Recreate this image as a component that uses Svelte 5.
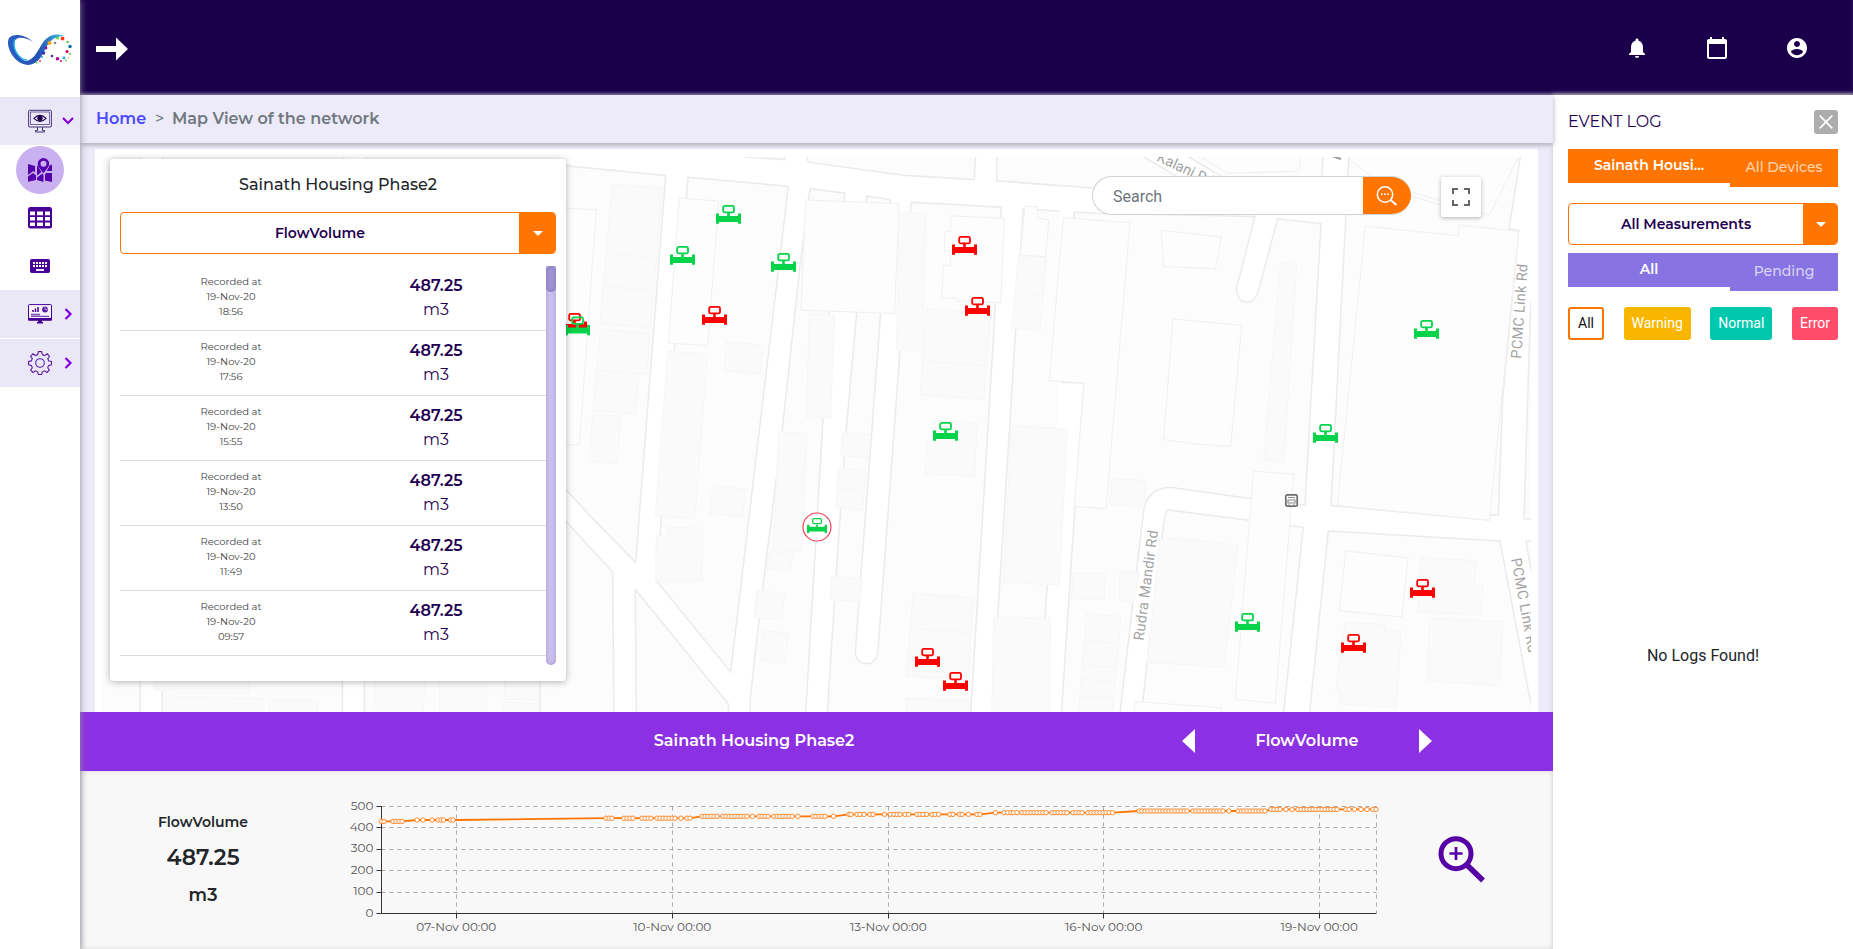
<script>
  const readings = ['18:56', '17:56', '15:55', '13:50', '11:49', '09:57'];

  const meters = [
    ['r', 562, 313], ['g', 565, 316.5], ['g', 716, 205], ['g', 670, 246], ['g', 771, 253], ['r', 702, 306],
    ['r', 952, 236], ['r', 965, 297], ['g', 933, 422], ['r', 915, 648], ['r', 943, 672],
    ['g', 1414, 320], ['g', 1313, 424], ['r', 1410, 579], ['r', 1341, 634], ['g', 1235, 613]
  ];

  const series = [
    [821.4, [381.5, 384, 393, 396, 399, 402]],
    [820, [417, 423, 432, 438, 441, 443.5, 450.5, 453]],
    [818.2, [606, 609, 612, 624, 627, 630, 633, 642, 645, 648, 651, 657, 660, 663, 666, 669, 672, 675, 681, 687, 690]],
    [816.3, [702, 705, 708, 711, 714, 717, 723, 726, 729, 732, 735, 738, 741, 744, 747, 752.5, 759, 762, 765, 768, 774, 777, 780, 783, 786, 789, 792, 798, 813, 816, 819, 822, 825, 833.5]],
    [814.4, [849, 851, 857, 860, 864, 870, 873, 884.5, 890.5, 894, 897, 900, 905, 908.5, 917, 920, 923, 926.5, 932, 935, 938.5, 950, 953, 959.5, 962, 968.5, 977, 980]],
    [812.7, [995.5, 1004, 1007.5, 1011, 1013.5, 1017, 1022, 1025, 1028, 1031, 1034, 1037, 1040, 1043, 1046, 1052, 1055, 1058, 1061, 1064, 1067, 1073, 1076, 1079, 1082, 1088, 1091, 1094, 1097, 1100, 1103, 1106, 1109, 1112.5]],
    [811, [1139, 1142, 1145, 1148, 1151, 1154, 1157, 1160, 1163, 1166, 1169, 1172, 1175, 1178, 1181, 1184, 1187, 1193, 1196, 1199, 1202, 1205, 1208, 1211, 1214, 1217, 1220, 1223, 1229, 1238, 1241, 1244, 1247, 1250, 1253, 1256, 1259, 1262, 1265]],
    [809.4, [1271, 1274, 1277, 1280, 1286, 1292, 1298, 1301, 1304, 1307, 1310, 1313, 1316, 1319, 1322, 1325, 1328, 1331, 1334, 1337, 1346, 1349, 1354.5, 1361, 1367, 1373, 1376]]
  ];
  const points = series.flatMap(([y, xs]) => xs.map((x) => [x, y]));
  const line = points.map((p) => p.join(',')).join(' ');

  const yTicks = [500, 400, 300, 200, 100, 0].map((v, i) => [v, 806.5 + i * 21.4]);
  const xTicks = [['07', 456.3], ['10', 672.3], ['13', 888.3], ['16', 1103.7], ['19', 1319.3]];

  const dots = [
    [49.5, 43, 2, '#ffa400'], [55, 43, 1.3, '#888'], [57.5, 38, 1.5, '#65cf35'], [62.5, 38.5, 1.9, '#fa3a12'],
    [67.7, 42, 1.3, '#67cb4b'], [70, 46.5, 1.8, '#146da5'], [67, 51.5, 1.6, '#e00063'], [70, 54, 1.1, '#76ce42'],
    [46, 48, 1.4, '#a0009a'], [43.5, 53, 1.8, '#3335b0'], [52, 56, 1.3, '#3b34a7'], [57.5, 58.7, 1.8, '#b1009b'],
    [64, 58, 1.4, '#15a9e7'], [61, 61, 1, '#ed1565'], [42, 57, 1, '#1aa7e8'], [40, 61, .9, '#e4234f'],
    [36.5, 62.5, 1, '#69ca4e'], [68.5, 58, .8, '#ffb12c'], [66, 60.5, .9, '#67c94c'], [47, 57, .6, '#ffc15a']
  ];
</script>

<div class="app">
  <aside class="side">
    <div class="logo">
      <svg width="80" height="97" viewBox="0 0 80 97">
        <defs>
          <linearGradient id="lg" x1="0" y1="0" x2="1" y2="0">
            <stop offset="0" stop-color="#2c5fc4" /><stop offset=".55" stop-color="#2450b4" /><stop offset="1" stop-color="#35c5ee" />
          </linearGradient>
        </defs>
        <path d="M32.500 41.500C25 34 13 33 9 38 5 45 13 64 28 65c13-1 15-14 21-22 4-5 9-7 15-7-9-4-17 0-22 8-6 10-9 16-16 17C17 59 9 43 18 38c5-1 10 1 14.500 3.500z" fill="url(#lg)" />
        <path d="M15 39c-4 7 4 21 12 21-6 0-13-8-13-14 0-3 0-5 1-7z" fill="#19b5ee" stroke="#19b5ee" />
        {#each dots as [x, y, r, c]}<circle cx={x} cy={y} {r} fill={c} />{/each}
      </svg>
    </div>
    <div class="item shade first">
      <svg class="ico" width="24" height="24" viewBox="0 0 24 24" fill="none" stroke="#45307c">
        <rect x=".6" y="1.300" width="22.800" height="16.700" rx="1" /><rect x="2.500" y="3" width="19" height="12.500" stroke-width=".7" />
        <path d="M9.500 18v3.500H7.500V23h9v-1.500h-2V18" />
        <path d="M6 9.300q6-6 12 0-6 6-12 0z" fill="#fff" stroke="#210052" stroke-width="1.200" /><circle cx="12" cy="9.200" r="2.700" fill="#210052" stroke="none" />
      </svg>
      <svg class="chev" width="12" height="12" viewBox="0 0 12 12"><path d="M1 3l5 5 5-5" fill="none" stroke="#8400da" stroke-width="2.200" /></svg>
    </div>
    <div class="item map">
      <span class="disc">
        <svg width="24" height="24" viewBox="0 0 24 24" fill="#5600ad">
          <path d="M0 6l7 2v6.500L5.500 13 0 17zM0 18.500l5-3.500 3 2.500V22l-8 1.800z" />
          <path d="M9 8l1-.5c.5 2.500 2 4.500 3.500 6.500L9 17.500zM9 19.500l5.500-4 1 1.400V24L9 22z" />
          <path d="M21.500 7.500L24 6.500V13h-5.500c1.300-1.800 2.500-3.500 3-5.500zM24 15v9l-7-1.500v-6l1-1.500z" />
          <path fill-rule="evenodd" d="M15.500 0a5.700 5.700 0 0 1 5.700 5.700c0 3.300-3.500 6-5.700 9.600-2.500-3.600-5.700-6.300-5.700-9.600A5.700 5.700 0 0 1 15.500 0zm0 2.700a3 3 0 1 0 0 6 3 3 0 0 0 0-6z" />
        </svg>
      </span>
    </div>
    <div class="item tb">
      <svg width="24" height="22" viewBox="0 0 24 22"><rect width="24" height="21.500" rx="2.500" fill="#480097" /><g fill="#fff"><path d="M2 4.500h5v3.700H2zM9 4.500h6v3.700H9zM17 4.500h5v3.700h-5zM2 10h5v3.500H2zM9 10h6v3.500H9zM17 10h5v3.500h-5zM2 15.500h5V19H2zM9 15.500h6V19H9zM17 15.500h5V19h-5z" /></g></svg>
    </div>
    <div class="item kb">
      <svg width="20" height="14" viewBox="0 0 20 14"><rect width="20" height="14" rx="1.800" fill="#480097" /><path d="M3 4h14M3 7h14" stroke="#fff" stroke-width="2" stroke-dasharray="2 1" /><path d="M6 11h8" stroke="#fff" stroke-width="1.800" /></svg>
    </div>
    <div class="item shade">
      <svg class="ico" width="24" height="20" viewBox="0 0 24 20"><rect x=".5" y=".6" width="23" height="15.500" rx=".8" fill="#f6f3fb" stroke="#480097" /><path d="M0 14h24v2.500H0zM10 16h4v2h1v1.500H9V18h1z" fill="#480097" /><path d="M5 8V6M7.500 8V4.500M10 8V3" stroke="#480097" stroke-width="1.500" /><circle cx="17" cy="5.500" r="2.900" fill="#5a1ca0" /><path d="M17 3v2.500h2.500" stroke="#fff" stroke-width=".5" fill="none" /><path d="M3 10.500h9M3 12.300h18" stroke="#7d4cb4" stroke-width="1.300" /></svg>
      <svg class="chev" width="12" height="12" viewBox="0 0 12 12"><path d="M3.500 1l5 5-5 5" fill="none" stroke="#8400da" stroke-width="2.200" /></svg>
    </div>
    <div class="item shade last">
      <svg class="ico" width="24" height="24" viewBox="0 0 24 24" fill="none" stroke="#5b1aa5" stroke-width="1.100">
        <circle cx="12" cy="12" r="4.300" />
        <path d="M10.300.6h3.400l.6 3 2.300 1 2.600-1.800 2.300 2.400-1.700 2.500 1 2.300 2.700.5v3.300l-2.800.6-1 2.300 1.700 2.400-2.400 2.400-2.400-1.700-2.300 1-.6 2.700h-3.400l-.6-2.700-2.300-1L5 21.500l-2.400-2.400 1.700-2.400-1-2.300-2.700-.6v-3.300l2.700-.6 1-2.300-1.700-2.400L5 2.800l2.400 1.700 2.300-1z" />
      </svg>
      <svg class="chev" width="12" height="12" viewBox="0 0 12 12"><path d="M3.500 1l5 5-5 5" fill="none" stroke="#8400da" stroke-width="2.200" /></svg>
    </div>
  </aside>

  <div class="main">
    <header>
      <svg class="arrow" width="32" height="24" viewBox="0 0 32 24"><path d="M0 9h20V.5L32 12 20 23.500V15H0z" fill="#fff" /></svg>
      <nav>
        <svg width="24" height="24" viewBox="0 0 24 24" fill="#fff"><path d="M12 22c1.100 0 2-.9 2-2h-4c0 1.100.9 2 2 2zm6-6v-5c0-3.070-1.640-5.640-4.500-6.320V4c0-.83-.67-1.500-1.500-1.500s-1.500.67-1.500 1.500v.68C7.630 5.360 6 7.920 6 11v5l-2 2v1h16v-1l-2-2z" /></svg>
        <svg width="24" height="24" viewBox="0 0 24 24" fill="#fff"><path d="M20 3h-1V1h-2v2H7V1H5v2H4c-1.100 0-2 .9-2 2v16c0 1.100.9 2 2 2h16c1.100 0 2-.9 2-2V5c0-1.100-.9-2-2-2zm0 18H4V8h16v13z" /></svg>
        <svg width="24" height="24" viewBox="0 0 24 24" fill="#fff"><path d="M12 2C6.480 2 2 6.480 2 12s4.480 10 10 10 10-4.480 10-10S17.520 2 12 2zm0 3c1.660 0 3 1.340 3 3s-1.340 3-3 3-3-1.340-3-3 1.340-3 3-3zm0 14.200c-2.500 0-4.710-1.280-6-3.220.03-1.990 4-3.080 6-3.080 1.990 0 5.970 1.090 6 3.080-1.290 1.940-3.500 3.220-6 3.220z" /></svg>
      </nav>
    </header>

    <div class="body">
      <div class="left">
        <div class="crumbs"><span class="home">Home</span><span class="sep">&gt;</span><span class="page">Map View of the network</span></div>
        <div class="mapwrap">
          <div class="mapbox">
            <svg class="tiles" width="1429" height="555" viewBox="102 157 1429 555">
              <g transform="translate(95 640) scale(.33333)" class="land">
                <path d="M-10-1500H137L135 240H-10zM203 20L201 240H742L746-1500H203zM814-1500L808 240H1560V-1500z" />
                <path class="bld" d="M180 100h52v52h-52zM242 110h220v50H242zM212 168l292 8v70H212zM522 178l146 3v60H522zM842 100h148l-6 150H834zM1033 110h143v140h-143zM1228 110h138v68h-138zM1222 186l143 8v50h-143z" />
              </g>
              <g transform="translate(560 140) scale(.33333 .3699)" class="land">
                <path class="road" d="M0 40L1500 46V160L0 68zM317 96L227 1142 0 928V1010L158 1168 162 1580H229L226 1215 506 1528V1580H572L570 1515 740 125H685L512 1438 290 1190 384 101z" stroke="none" />
                <path d="M0 68L317 96 227 1142 100 1025 0 928z" />
                <path d="M384 101L685 125 512 1438 288 1190 300 1066z" />
                <path d="M-60 955L158 1168 162 1580H-60zM226 1215L505 1525 506 1580H229z" />
                <path class="road" stroke="none" d="M560 1580L720 340 750 120H1500V1580z" />
                <path d="M750 132L855 144 808 465 735 1580H572L570 1515 598 1290 607 1220 666 790 720 340z" />
                <path d="M920 152L990 161 962 468 1020 468 1054 168 1324 182 1230 1580H800L828 1180 858 790 890 468z" />
                <path class="road" d="M962 468L902 1187 886 1385Q888 1415 919 1416 950 1415 954 1380L1020 568 1028 468" />
                <path d="M1390 185L1600 200 1506 655 1455 1290 1440 1580H1295L1313 1290z" />
                <path d="M740 46L745 60 1030 95 1243 107 1247 40H740zM1312 40L1310 110 1600 130V40zM555 46L674 53 672 40z" />
                <path class="wht" d="M0 184L109 189 58 824H0zM358 157L476 165 443 556 325 549zM737 162L1017 172 1004 469 723 460zM1173 205L1333 212 1322 440 1192 435V427H1146L1150 340H1172V300H1153L1155 247H1172zM1394 180H1432V211L1467 216 1457 316 1382 311z" />
                <path class="bld" d="M157 119L308 130 270 508 120 497zM121 512L269 522 261 633 236 632 227 741 99 732zM98 741L182 746 172 875 87 869zM147 309L296 319M132 396L283 407M110 622L238 632M323 571L442 579 405 1024 286 1016zM325 1047L428 1050 425 1192H287L289 1070H325zM500 546L607 554 600 632 492 624zM458 935L557 944 547 1018 449 1010zM748 470L824 472 811 752 739 750zM752 616H816M656 790L740 794 725 1112 640 1110zM648 904H736M645 1022H732M628 1114L698 1118 690 1164 620 1158zM590 1219L673 1225 665 1297 583 1291zM610 1326L686 1334 674 1416 601 1407zM848 791L932 796 927 858 843 854zM835 888L917 894 908 1000 828 994zM831 945H912M815 1181L906 1187 899 1248 811 1243zM1018 195L1097 199 1087 568 1009 568zM1100 457L1292 467 1271 701 1081 689zM1089 598L1280 610M1120 757L1251 765 1243 909 1095 902 1101 810H1117zM1059 1226L1240 1237 1224 1460 1039 1449zM1048 1320L1232 1332M1039 1510L1228 1514V1580H1039zM1375 313L1459 318 1440 515 1355 509zM1370 415L1450 420M1354 773L1521 779 1500 1202 1331 1196zM1301 1290L1472 1293 1468 1580H1295z" />
              </g>
              <g transform="translate(1040 140) scale(.33333 .3699)" class="land">
                <path class="road" stroke="none" d="M60 110H1500V1580H40z" />
                <path d="M-130 40L-130 110 160 130 480 135 300 40zM435 40L640 150 843 140 850 40z" />
                <path d="M170 198L645 207 590 400Q590 437 621 439 648 437 656 405L713 213 843 226 795 987 752 983 635 970 400 940Q320 935 310 1010L236 1580H62L105 990 132 657 66 655 103 195z" />
                <path d="M385 1000L628 1028 790 1047 727 1580H300L365 1080 374 1020Q378 1000 385 1000z" />
                <path d="M927 40H1442L1407 240 1436 245 1388 700 1375 1014 1350 1013 1348 1028 873 988z" />
                <path d="M865 1057L1380 1084 1473 1525 1490 1580H805zM1472 440L1452 1024 1490 1026V440zM1458 1084H1490V1250z" />
                <path class="wht" d="M70 210L270 224 198 997 103 990 132 657 28 650zM364 244L544 262 526 348 371 342zM399 484L605 501 572 828 480 823 371 810zM641 895L761 904 706 1522 586 1512zM976 233L1255 259 1258 230 1436 247 1348 1028 892 988zM918 1111L1104 1130 1085 1290 898 1272zM485 46L562 90 777 84 782 46M927 52L1020 115 1348 203 1435 46M1020 128L1200 175M280 1580L284 1518 545 1535V1580" />
                <path class="bld" d="M722 331L770 337 731 870 671 864zM215 915L317 921 313 990 211 986zM98 1172H195L193 1242 96 1240zM239 1168H298L280 1249 239 1246zM140 1280L243 1288 216 1568 114 1560zM134 1353L238 1361M128 1420L228 1426M122 1458L225 1465M118 1503L220 1510M360 1078L460 1080 594 1096 552 1425 322 1412zM1142 1130L1308 1137 1303 1200 1329 1203 1323 1284 1135 1276zM1168 1293L1388 1302 1378 1475 1162 1462zM915 1304L1034 1310 1033 1325 1083 1328 1069 1535 897 1524 900 1490 887 1488zM0 779L82 781 58 1202H0z" />
              </g>
              <g class="roads">
                <text transform="translate(1156 160.500) rotate(25)">Kalani Rd</text>
                <text transform="translate(1521 359) rotate(-86)" textLength="95">PCMC Link Rd</text>
                <text transform="translate(1143.500 641) rotate(-82.500)" textLength="111">Rudra Mandir Rd</text>
                <text transform="translate(1511 559) rotate(79.500)" textLength="96">PCMC Link Rd</text>
                <path d="M1332 156l9 3" stroke="#999" stroke-width="2" />
              </g>
              <g transform="translate(1285 494)"><rect x=".8" y=".8" width="11.400" height="11.400" rx="1.500" fill="#fff" stroke="#6c6c6c" stroke-width="1.700" /><path d="M3 3.500h7M3 6h7v3H3zM3.500 10.500h1M8.500 10.500h1" stroke="#888" fill="none" stroke-width="1.100" /></g>
              {#each meters as [kind, x, y]}
                <g transform="translate({x} {y})" class={kind}>
                  <rect x="7.200" y=".9" width="10.800" height="6.500" rx="1.500" fill="none" stroke-width="1.800" />
                  <path d="M11.200 8h2.600v3H22V8.500h3v10.200h-3v-1.800H3v1.800H0V8.500h3V11h8.200z" stroke="none" />
                </g>
              {/each}
              <g>
                <circle cx="817" cy="527" r="14" fill="#fff" stroke="#ea4358" stroke-width="1.200" />
                <g class="g" transform="translate(807 518) scale(.8)"><rect x="7.200" y=".9" width="10.800" height="6" rx="1.500" fill="none" stroke-width="1.600" /><path d="M11.500 8h2v3H22V8.500h3v10.200h-3v-1.800H3v1.800H0V8.500h3V11h8.500z" stroke="none" /></g>
              </g>
            </svg>

            <section class="card">
              <h2>Sainath Housing Phase2</h2>
              <div class="select"><span>FlowVolume</span><b><i></i></b></div>
              <div class="list">
                <div class="rows">
                  {#each readings as time}
                    <div class="row">
                      <div class="when">Recorded at<br />19-Nov-20<br />{time}</div>
                      <div class="val"><strong>487.25</strong><span>m3</span></div>
                    </div>
                  {/each}
                </div>
                <div class="track"><div class="thumb"></div></div>
              </div>
            </section>

            <div class="search">
              <span>Search</span>
              <button aria-label="Search"><svg width="22" height="20" viewBox="0 0 22 20" fill="none" stroke="#fff" stroke-width="1.500"><circle cx="9" cy="8.500" r="7.700" /><path d="M14.500 14l6 5" stroke-width="2" /><path d="M5 8.300h8" stroke-dasharray="1.700 1.400" /></svg></button>
            </div>
            <div class="full"><svg width="18" height="18" viewBox="0 0 18 18" fill="none" stroke="#666" stroke-width="2"><path d="M1 6V1h5M12 1h5v5M17 12v5h-5M6 17H1v-5" /></svg></div>
          </div>
        </div>

        <div class="band">
          <span class="site">Sainath Housing Phase2</span>
          <div class="pick">
            <svg width="13" height="24" viewBox="0 0 13 24"><path d="M13 0v24L0 12z" fill="#fff" /></svg>
            <span>FlowVolume</span>
            <svg width="13" height="24" viewBox="0 0 13 24"><path d="M0 0v24l13-12z" fill="#fff" /></svg>
          </div>
        </div>

        <div class="trend">
          <div class="stat"><span class="s1">FlowVolume</span><span class="s2">487.25</span><span class="s3">m3</span></div>
          <svg class="chart" width="1060" height="178" viewBox="340 771 1060 178">
            {#each yTicks as [v, y]}
              {#if v > 0}<path d="M381.500 {Math.floor(y) + .5}H1376.500" class="grid" />{/if}
              <path d="M376.500 {Math.floor(y) + .5}h5" stroke="#333" />
              <text x="373.500" y={y + 3} text-anchor="end">{v}</text>
            {/each}
            {#each xTicks as [d, x]}
              <path d="M{Math.floor(x) + .5} 806.500V913" class="grid" />
              <path d="M{Math.floor(x) + .5} 913.500v5" stroke="#333" />
              <text {x} y="931" text-anchor="middle">{d}-Nov 00:00</text>
            {/each}
            <path d="M1376.500 806.500V913" class="grid" />
            <path d="M381.500 806V913.500H1376.500" fill="none" stroke="#333" />
            <polyline points={line} fill="none" stroke="#ff7500" stroke-width="1.800" />
            {#each points as [x, y]}<circle cx={x} cy={y} r="2.200" fill="#fff" stroke="#ff7f1a" stroke-width=".9" />{/each}
          </svg>
          <svg class="zoom" width="48" height="48" viewBox="0 0 48 48" fill="none" stroke="#5600a5"><circle cx="18" cy="17.700" r="15" stroke-width="5" /><path d="M29 29l16 15.500" stroke-width="5.500" /><path d="M18 11v13M11.500 17.500h13" stroke-width="2.700" /></svg>
        </div>
      </div>

      <aside class="events">
        <div class="head"><h3>EVENT LOG</h3><button class="x" aria-label="Close"><svg width="14" height="14" viewBox="0 0 14 14"><path d="M.7.7l12.600 12.600M13.300.7L.7 13.300" stroke="#fff" stroke-width="1.700" /></svg></button></div>
        <div class="tabs orange"><span class="on">Sainath Housi...</span><span class="off">All Devices</span></div>
        <div class="select ev"><span>All Measurements</span><b><i></i></b></div>
        <div class="tabs violet"><span class="on">All</span><span class="off">Pending</span></div>
        <div class="pills"><span class="p0">All</span><span class="p1">Warning</span><span class="p2">Normal</span><span class="p3">Error</span></div>
        <div class="none">No Logs Found!</div>
      </aside>
    </div>
  </div>
</div>

<style>
  :global(body) { margin: 0; background: #edebf9; overflow: hidden; }
  * { box-sizing: border-box; }
  .app { display: flex; width: 1853px; height: 949px; font-family: Montserrat, Inter, sans-serif; color: #222529; }
  svg { display: block; flex: none; }
  .side { width: 80px; background: #fff; box-shadow: 0 0 7px #8e8b99; position: relative; z-index: 3; flex: none; }
  .logo { height: 97px; }
  .item { height: 48px; display: flex; align-items: center; justify-content: center; position: relative; }
  .shade { background: #eae8f6; }
  .shade.last { margin-top: 1px; }
  .item.map { height: 50px; }
  .item.tb { padding-bottom: 2px; }
  .item.kb { height: 47px; padding-bottom: 2px; }
  .chev { position: absolute; left: 62px; top: 18px; }
  .disc { width: 48px; height: 48px; border-radius: 50%; background: #c9b0f0; display: flex; align-items: center; justify-content: center; }
  .main { flex: 1; display: flex; flex-direction: column; min-width: 0; }
  header { height: 95px; background: #1a004b; display: flex; align-items: center; justify-content: space-between; padding: 3px 44px 0 16px; box-shadow: inset 0 -3px 3px -1px #6d5d8a; }
  nav { display: flex; gap: 56px; padding-bottom: 2px; }
  .body { display: flex; height: 854px; }
  .left { width: 1473px; display: flex; flex-direction: column; }
  .crumbs { height: 48px; display: flex; align-items: center; padding: 0 16px 2px; background: #edebf9; font-size: 16px; font-weight: 600; box-shadow: 0 2px 5px #aaa9b5; position: relative; z-index: 1; color: #717880; white-space: pre; }
  .home { color: #4b49ff; width: 50px; }
  .sep { margin: 0 8px 0 9px; width: 9px; font-weight: 500; }
  .mapwrap { height: 569px; padding: 6px 15px 0; background: #edebf9; }
  .mapbox { height: 563px; background: #fff; padding: 8px 7px 0; position: relative; overflow: hidden; }
  .land path { fill: #fcfcfc; stroke: #ebebeb; stroke-width: 1.500px; vector-effect: non-scaling-stroke; }
  .land path.road { fill: #fff; }
  .land path[stroke='none'] { stroke: none; }
  .land path.wht { fill: #fdfdfd; stroke: #f0f0f0; stroke-width: 1px; }
  .land path.bld { fill: #fafafa; stroke: #f6f6f6; stroke-width: 1px; }
  .roads text { font: 400 14.500px Roboto, sans-serif; fill: #a3a3a3; stroke: #fff; stroke-width: 2px; paint-order: stroke; }
  .g { fill: #05d44b; stroke: #05d44b; }
  .r { fill: #f00; stroke: #f00; }
  .card { position: absolute; left: 15px; top: 10px; width: 456px; height: 522px; background: #fff; border-radius: 4px; box-shadow: 0 1px 7px rgba(0, 0, 0, .3); padding: 16px 10px 0; }
  h2 { font-size: 16px; font-weight: 500; line-height: 20px; margin: 0 0 17px; text-align: center; }
  .select { height: 42px; display: flex; border: 1px solid #ff7500; border-radius: 4px; overflow: hidden; font-size: 14px; font-weight: 600; color: #1f0052; }
  .select span { flex: 1; display: flex; align-items: center; justify-content: center; }
  .select b { width: 36px; background: #ff7500; display: flex; align-items: center; justify-content: center; padding-left: 2px; }
  .select i { border: 5px solid transparent; border-top-color: #fff; border-bottom: 0; }
  .list { display: flex; margin-top: 12px; height: 399px; }
  .rows { flex: 1; overflow: hidden; }
  .row { height: 65px; border-bottom: 1px solid #dcdcdc; display: flex; }
  .when { width: 222px; padding-top: 8px; font-size: 10px; line-height: 15px; text-align: center; color: #444; }
  .val { width: 188px; text-align: center; color: #1f0052; display: flex; flex-direction: column; font-size: 16px; line-height: 24px; padding-top: 8px; }
  .val strong { font-weight: 600; }
  .val span { font-weight: 400; }
  .track { width: 10px; background: #cbc0ee; border-radius: 0 0 5px 5px; box-shadow: inset 0 0 4px #a498d0; }
  .thumb { height: 26px; border-radius: 5px; background: #a194d4; box-shadow: inset 0 0 4px #8377b5; }
  .search { position: absolute; left: 997px; top: 27px; width: 319px; height: 39px; display: flex; border-radius: 20px; overflow: hidden; background: #fff; border: 1px solid #ced4da; border-right: 0; font: 16px/39px Roboto, sans-serif; color: #6c757d; }
  .search span { flex: 1; padding-left: 20px; }
  .search button { width: 48px; margin: -1px 0; border: 0; background: #ff7500; display: flex; align-items: center; justify-content: center; padding: 0; }
  .full { position: absolute; left: 1346px; top: 28px; width: 40px; height: 40px; border-radius: 2px; background: #fff; box-shadow: 0 1px 4px rgba(0, 0, 0, .3); display: flex; align-items: center; justify-content: center; }
  .band { height: 59px; background: #8c30e4; color: #fff; display: grid; grid-template-columns: 1102px 250px; align-items: center; font-size: 16px; font-weight: 600; position: relative; z-index: 2; padding-bottom: 2px; }
  .site { text-align: center; padding-left: 246px; }
  .pick { display: flex; align-items: center; justify-content: space-between; }
  .trend { height: 178px; background: #f8f8f8; display: flex; box-shadow: inset 2px 0 6px -2px #bbb; }
  .stat { width: 260px; padding: 41px 14px 0 0; display: flex; flex-direction: column; align-items: center; }
  .s1 { font-size: 14px; line-height: 20px; font-weight: 600; }
  .s2 { font-size: 22px; line-height: 30px; font-weight: 600; margin-top: 11px; }
  .s3 { font-size: 17.600px; line-height: 24px; font-weight: 600; margin-top: 10px; }
  .chart text { font: 400 12px Montserrat, Inter, sans-serif; fill: #555; }
  .grid { stroke: #aaa; stroke-dasharray: 4 4; }
  .zoom { margin: 65px 0 0 38px; }
  .events { width: 300px; background: #fff; padding: 15px 15px 0; box-shadow: 0 0 5px #ccc; }
  .head { display: flex; justify-content: space-between; height: 39px; align-items: flex-start; }
  h3 { font-size: 16px; line-height: 23px; font-weight: 400; margin: 0; color: #1f0052; }
  .x { width: 24px; height: 24px; border: 0; border-radius: 3px; background: #adadad; padding: 0; display: flex; align-items: center; justify-content: center; }
  .tabs { display: flex; height: 38px; color: #fff; font-size: 14px; }
  .tabs .on { width: 162px; height: 34px; line-height: 32px; text-align: center; font-weight: 600; }
  .tabs .off { width: 108px; text-align: center; line-height: 36px; font-weight: 500; color: rgba(255, 255, 255, .7); }
  .orange span { background: #ff7500; }
  .violet span { background: #8773e2; }
  .ev { margin: 16px 0 8px; }
  .ev b { width: 34px; }
  .pills { margin-top: 16px; display: flex; justify-content: space-between; font: 14px/33px Roboto, sans-serif; color: #fff; text-align: center; }
  .pills span { height: 33px; border-radius: 3px; }
  .pills .p0 { width: 36px; border: 2px solid #ff7500; color: #111; line-height: 29px; }
  .p1 { width: 67px; background: #f9b600; }
  .p2 { width: 62px; background: #00c8af; }
  .p3 { width: 46px; background: #ff4d6b; }
  .none { margin-top: 304px; text-align: center; font: 16px/24px Roboto, sans-serif; color: #212529; }
</style>
